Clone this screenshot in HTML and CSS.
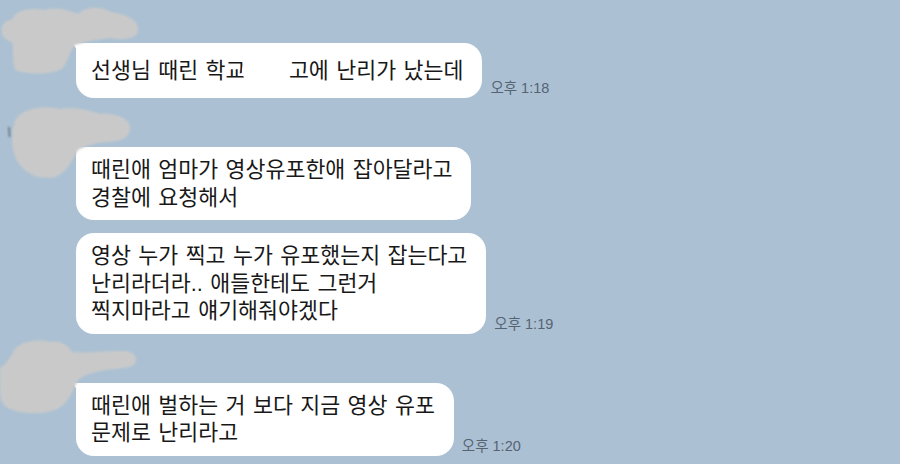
FILE: index.html
```html
<!DOCTYPE html>
<html lang="ko">
<head>
    <meta charset="UTF-8">
    <title>채팅</title>
    <link rel="stylesheet" href="styles.css">
</head>
<body>
    <div class="chat">
        <div class="group">
            <div class="name"></div>
            <div class="row">
                <div class="bubble first">선생님 때린 학교 <span class="censor">○○</span>고에 난리가 났는데</div>
                <span class="time">오후 1:18</span>
            </div>
        </div>

        <div class="group">
            <div class="name"></div>
            <div class="row">
                <div class="bubble first">때린애 엄마가 영상유포한애 잡아달라고<br>경찰에 요청해서</div>
            </div>
            <div class="row">
                <div class="bubble">영상 누가 찍고 누가 유포했는지 잡는다고<br>난리라더라.. 애들한테도 그런거<br>찍지마라고 얘기해줘야겠다</div>
                <span class="time">오후 1:19</span>
            </div>
        </div>

        <div class="group">
            <div class="name"></div>
            <div class="row">
                <div class="bubble first">때린애 벌하는 거 보다 지금 영상 유포<br>문제로 난리라고</div>
                <span class="time">오후 1:20</span>
            </div>
        </div>
    </div>

    <!-- 가린 부분 (프로필/이름) -->
    <svg class="marks" width="900" height="464" viewBox="0 0 900 464">
        <path d="M12 20 C14 10 30 7 45 10 C58 6 70 11 78 14 C86 6 101 6 111 12 C126 14 139 20 138 30 C138 38 125 41 110 38 C96 40 83 42 75 45 C70 51 68 61 63 68 C54 75 26 75 15 70 C12 60 14 50 12 42 C4 40 0 34 2 27 C4 21 8 20 12 20 Z"/>
        <path d="M14 125 C16 110 40 104 60 109 C75 106 90 111 100 114 C115 113 130 118 130 128 C130 138 120 142 105 142 C95 143 85 146 78 150 C72 160 68 172 55 177 C40 180 28 175 20 165 C12 155 10 140 14 125 Z"/>
        <path d="M12 355 C15 342 35 338 50 342 C60 340 68 345 72 352 C90 354 115 349 130 352 C138 355 138 364 130 367 C110 370 90 370 78 380 C72 392 68 405 55 410 C40 415 20 414 8 408 C0 404 0 395 0 385 L0 368 C5 365 8 360 12 355 Z"/>
        <path class="speck" d="M9 127 L9.6 137"/>
    </svg>
</body>
</html>
```

FILE: styles.css
```css
body {
    margin: 0;
    background-color: #abc1d3;
    font-family: "Liberation Sans", "Noto Sans CJK KR", sans-serif;
    color: #181818;
    overflow: hidden;
}

.chat {
    padding-top: 13px;
    padding-left: 76px;
}

.group + .group {
    margin-top: 19px;
}

.name {
    height: 30px;
}

.row {
    display: flex;
    align-items: flex-end;
}

.row + .row {
    margin-top: 13px;
}

.bubble {
    position: relative;
    box-sizing: border-box;
    min-height: 55px;
    display: flex;
    align-items: center;
    background-color: #fff;
    border-radius: 18px;
    padding: 9px 19px 9px 15px;
    font-size: 21.7px;
    line-height: 27.5px;
    word-spacing: 1.4px;
    white-space: nowrap;
}

.bubble.first {
    border-top-left-radius: 3px;
}

.bubble.first::before {
    content: "";
    position: absolute;
    left: -4px;
    top: 0;
    width: 0;
    height: 0;
    border-top: 9px solid #fff;
    border-left: 7px solid transparent;
}

.censor {
    position: relative;
    display: inline-block;
    width: 2em;
    color: transparent;
}

.censor::after {
    content: "";
    position: absolute;
    left: -4px;
    right: 0;
    top: -4px;
    bottom: -4px;
    background: #fff;
    border-radius: 50%;
}

.time {
    font-size: 14.5px;
    line-height: 17px;
    color: #566373;
    margin-left: 8px;
    margin-bottom: 1px;
    white-space: nowrap;
}

.marks {
    position: absolute;
    top: 0;
    left: 0;
    fill: #c9c9c9;
    filter: blur(0.8px);
}

.marks .speck {
    fill: none;
    stroke: #4a5560;
    stroke-width: 1.2;
}
```
